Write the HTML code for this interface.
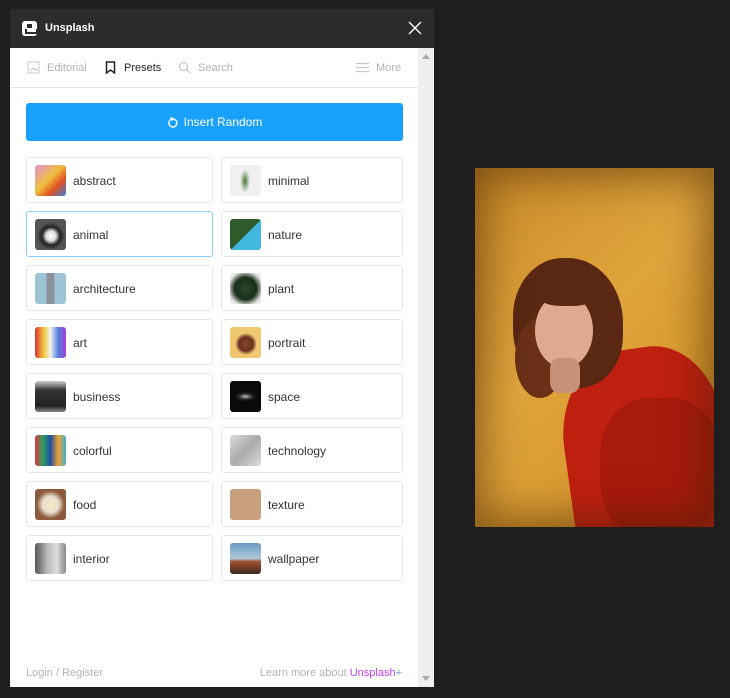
<!DOCTYPE html>
<html><head><style>
*{box-sizing:border-box;margin:0;padding:0}
body{width:730px;height:698px;background:#1e1e1e;font-family:"Liberation Sans",sans-serif;position:relative;overflow:hidden}
.panel{position:absolute;left:10px;top:9px;width:424px;height:678px;background:#fff;overflow:hidden}
.hdr{height:39px;background:#2c2c2c;position:relative;color:#fff;font-weight:bold;font-size:11px}
.hdr .logo{position:absolute;left:12px;top:12px;width:15px;height:15px;background:#fff;border-radius:3px}
.hdr .logo:after{content:"";position:absolute;left:5px;top:3px;width:5px;height:4px;background:#2c2c2c}
.hdr .logo:before{content:"";position:absolute;left:3px;top:8px;width:9px;height:3px;border:2px solid #2c2c2c;border-top:none}
.hdr .t{position:absolute;left:35px;top:13px}
.x{position:absolute;right:12px;top:12px;width:14px;height:14px}
.tabs{position:absolute;top:39px;left:0;width:408px;height:40px;border-bottom:1px solid #e8e8e8;font-size:11px;color:#b3b3b3}
.tabs span{position:absolute;top:14px}
.sb{position:absolute;right:0;top:39px;width:16px;height:639px;background:#efefef}
.btn{position:absolute;left:16px;top:94px;width:377px;height:38px;background:#18a0fb;border-radius:3px;color:#fff;font-size:12px;text-align:center;line-height:38px}
.c{position:absolute;height:46px;border:1px solid #e8e8e8;border-radius:3px;font-size:12px;color:#333}
.c.sel{border-color:#8ccdf7}
.c i{position:absolute;left:8px;top:7px;width:31px;height:31px;border-radius:3px}
.c b{font-weight:normal;position:absolute;left:46px;top:16px}
.ft{position:absolute;bottom:8px;font-size:11px;color:#b3b3b3}
.photo{position:absolute;left:475px;top:168px;width:239px;height:359px;overflow:hidden;background:linear-gradient(135deg,#c98a28,#e0a43c 45%,#d99a30 70%,#b87a20)}
.photo div{position:absolute;border-radius:50%}
.photo .vig{left:0;top:0;width:239px;height:359px;border-radius:0;box-shadow:inset 0 0 40px 10px rgba(60,30,0,.5)}
</style></head><body>
<div class="panel">
<div class="hdr"><div class="logo"></div><div class="t">Unsplash</div>
<svg class="x" viewBox="0 0 14 14"><path d="M1 1L13 13M13 1L1 13" stroke="#fff" stroke-width="1.4"/></svg></div>
<div class="tabs">
<svg style="position:absolute;left:17px;top:13px" width="13" height="13" viewBox="0 0 13 13"><rect x="1" y="1" width="11" height="11" fill="none" stroke="#c8c8c8"/><path d="M3 10l3-3 2 2 1-1 2 2" stroke="#c8c8c8" fill="none"/></svg>
<span style="left:37px">Editorial</span>
<svg style="position:absolute;left:95px;top:13px" width="11" height="13" viewBox="0 0 11 13"><path d="M1.5 1h8v11l-4-3-4 3z" fill="none" stroke="#222" stroke-width="1.5"/></svg>
<span style="left:114px;color:#222">Presets</span>
<svg style="position:absolute;left:168px;top:13px" width="13" height="13" viewBox="0 0 13 13"><circle cx="5.5" cy="5.5" r="4" fill="none" stroke="#c8c8c8" stroke-width="1.3"/><path d="M8.5 8.5l3.5 3.5" stroke="#c8c8c8" stroke-width="1.3"/></svg>
<span style="left:188px">Search</span>
<svg style="position:absolute;left:346px;top:14px" width="13" height="11" viewBox="0 0 13 11"><path d="M0 1.5h13M0 5.5h13M0 9.5h13" stroke="#c8c8c8" stroke-width="1.2"/></svg>
<span style="left:366px">More</span>
</div>
<div class="sb"><svg style="position:absolute;left:4px;top:6px" width="8" height="5"><path d="M0 5L4 0 8 5z" fill="#aaa"/></svg><svg style="position:absolute;left:4px;top:628px" width="8" height="5"><path d="M0 0L4 5 8 0z" fill="#aaa"/></svg></div>
<div class="btn"><svg style="vertical-align:-2px;margin-right:6px" width="11" height="12" viewBox="0 0 11 12"><path d="M3 4.2A4 4 0 1 0 5.5 3" fill="none" stroke="#fff" stroke-width="1.4"/><path d="M5.5 0.5v5l-3-2.5z" fill="#fff"/></svg>Insert Random</div>

<div class="c" style="left:16px;top:148px;width:187px"><i style="background:linear-gradient(135deg,#e090d0,#f0c040 45%,#e05020 70%,#3080e0)"></i><b>abstract</b></div>
<div class="c" style="left:211px;top:148px;width:182px"><i style="background:radial-gradient(ellipse 5px 12px at 15px 16px,#4a7a3a,#f0f0f0)"></i><b>minimal</b></div>
<div class="c sel" style="left:16px;top:202px;width:187px"><i style="background:radial-gradient(circle at 16px 17px,#fff 0,#ddd 5px,#222 9px,#555 14px)"></i><b>animal</b></div>
<div class="c" style="left:211px;top:202px;width:182px"><i style="background:linear-gradient(135deg,#2f5a2a 50%,#40b8e0 52%)"></i><b>nature</b></div>
<div class="c" style="left:16px;top:256px;width:187px"><i style="background:linear-gradient(90deg,#9cc4d4 35%,#8a9098 40%,#8a9098 60%,#9cc4d4 65%)"></i><b>architecture</b></div>
<div class="c" style="left:211px;top:256px;width:182px"><i style="background:radial-gradient(circle,#2a4a2a,#1a2e1a 50%,#e8e8e8 80%)"></i><b>plant</b></div>
<div class="c" style="left:16px;top:310px;width:187px"><i style="background:linear-gradient(90deg,#e03030,#f0d040 30%,#f0f0f0 50%,#5080e0 75%,#a040d0)"></i><b>art</b></div>
<div class="c" style="left:211px;top:310px;width:182px"><i style="background:radial-gradient(circle at 16px 17px,#8a4a2a 0,#6a3020 7px,#f0c870 11px)"></i><b>portrait</b></div>
<div class="c" style="left:16px;top:364px;width:187px"><i style="background:linear-gradient(180deg,#ccc,#333 30%,#222 80%,#888)"></i><b>business</b></div>
<div class="c" style="left:211px;top:364px;width:182px"><i style="background:radial-gradient(ellipse 12px 5px,#bbb,#222 60%,#0a0a0a)"></i><b>space</b></div>
<div class="c" style="left:16px;top:418px;width:187px"><i style="background:linear-gradient(90deg,#e03040,#30a060 25%,#2050a0 50%,#f0a030 75%,#40b0d0)"></i><b>colorful</b></div>
<div class="c" style="left:211px;top:418px;width:182px"><i style="background:linear-gradient(135deg,#ddd,#aaa 50%,#ddd)"></i><b>technology</b></div>
<div class="c" style="left:16px;top:472px;width:187px"><i style="background:radial-gradient(circle,#f8e8c0 0,#e8e0d0 8px,#8a5a3a 14px)"></i><b>food</b></div>
<div class="c" style="left:211px;top:472px;width:182px"><i style="background:#c8a080"></i><b>texture</b></div>
<div class="c" style="left:16px;top:526px;width:187px"><i style="background:linear-gradient(90deg,#555,#bbb 40%,#ddd 70%,#888)"></i><b>interior</b></div>
<div class="c" style="left:211px;top:526px;width:182px"><i style="background:linear-gradient(180deg,#6a9ac0,#b0c8d8 50%,#a05030 60%,#3a2a20)"></i><b>wallpaper</b></div>

<div class="ft" style="left:16px">Login / Register</div>
<div class="ft" style="right:32px">Learn more about <span style="color:#c040f0">Unsplash</span><span style="color:#70a0f0">+</span></div>
</div>
<div class="photo">
<div style="left:90px;top:180px;width:160px;height:200px;background:#c02010;border-radius:45% 40% 0 0;transform:rotate(-8deg)"></div>
<div style="left:125px;top:230px;width:120px;height:140px;background:#a81a0c;border-radius:40%"></div>
<div style="left:38px;top:90px;width:110px;height:130px;background:#5a2812;border-radius:45% 50% 40% 45%"></div>
<div style="left:40px;top:150px;width:50px;height:80px;background:#6a3018"></div>
<div style="left:60px;top:125px;width:58px;height:75px;background:#e0a890"></div>
<div style="left:62px;top:110px;width:60px;height:28px;background:#5a2812;border-radius:40%"></div>
<div style="left:75px;top:190px;width:30px;height:35px;background:#c89078;border-radius:30%"></div>
<div class="vig"></div>
</div>
</body></html>
